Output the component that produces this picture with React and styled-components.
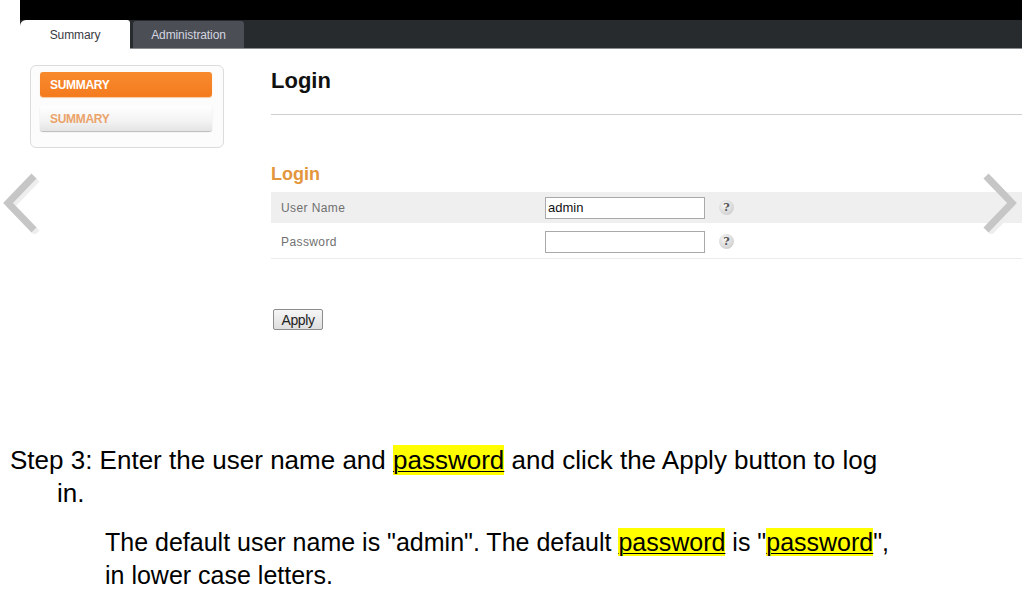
import React from "react";
import styled, { createGlobalStyle } from "styled-components";

const Global = createGlobalStyle`
  html, body { margin: 0; padding: 0; background: #fff; }
  body { font-family: "Liberation Sans", Arial, sans-serif; }
  * { box-sizing: border-box; }
`;

const Page = styled.div`
  position: relative;
  width: 1022px;
  height: 593px;
  overflow: hidden;
  background: #fff;
`;

const TopBar = styled.div`
  margin-left: 20px;
  height: 20px;
  background: #000;
`;

const TabStrip = styled.div`
  margin-left: 20px;
  height: 29px;
  display: flex;
  align-items: flex-end;
  gap: 3px;
  background: #272b2e;
  border-bottom: 1px solid #8a8d90;
`;

const Tab = styled.div`
  width: ${(p) => p.$w}px;
  display: flex;
  align-items: center;
  justify-content: center;
  font-size: 12px;
  letter-spacing: -0.1px;
  border-radius: ${(p) => (p.$active ? "6px 3px 0 0" : "3px 3px 0 0")};
  background: ${(p) => (p.$active ? "#fff" : "#4b4e54")};
  color: ${(p) => (p.$active ? "#3a3a44" : "#d4d6e0")};
  margin-bottom: ${(p) => (p.$active ? "-1px" : "0")};
  height: ${(p) => (p.$active ? "29px" : "27px")};
`;

const Main = styled.div`
  display: flex;
  height: 395px;
`;

const Side = styled.div`
  margin: 16px 0 0 30px;
  width: 194px;
  height: 83px;
  padding: 6px 11px 0 9px;
  border: 1px solid #dcdcdc;
  border-radius: 6px;
  background: #fcfcfc;
  display: flex;
  flex-direction: column;
  gap: 9px;
`;

const SideItem = styled.div`
  height: 25px;
  display: flex;
  align-items: center;
  padding-left: 10px;
  font-size: 12px;
  font-weight: bold;
  letter-spacing: -0.3px;
  border-radius: 3px;
  color: ${(p) => (p.$active ? "#fff" : "#eba36a")};
  background: ${(p) =>
    p.$active
      ? "linear-gradient(#f88a2e, #f47b1e)"
      : "linear-gradient(#ffffff, #f3f3f3 60%, #e4e4e4)"};
  box-shadow: ${(p) =>
    p.$active ? "0 1px 1px #f6c9a0" : "0 1px 1px #b8b8b8"};
`;

const Content = styled.div`
  margin-left: 47px;
  flex: 1;
  display: flex;
  flex-direction: column;
`;

const Title = styled.h1`
  margin: 19px 0 0;
  font-size: 22px;
  line-height: 26px;
  font-weight: bold;
  color: #111;
`;

const Rule = styled.div`
  margin-top: 20px;
  height: 1px;
  background: #cfcfcf;
`;

const SubTitle = styled.h2`
  margin: 48px 0 0;
  font-size: 18px;
  line-height: 22px;
  font-weight: bold;
  color: #e3963c;
`;

const Form = styled.div`
  margin-top: 7px;
  display: flex;
  flex-direction: column;
`;

const Row = styled.div`
  display: flex;
  align-items: center;
  height: ${(p) => (p.$alt ? 32 : 35)}px;
  padding-top: ${(p) => (p.$alt ? 0 : 1)}px;
  background: ${(p) => (p.$alt ? "#efefef" : "#fff")};
  border-bottom: ${(p) => (p.$alt ? "1px solid #fff" : "1px solid #ececec")};
`;

const Label = styled.div`
  width: 274px;
  padding-left: 10px;
  font-size: 12px;
  letter-spacing: 0.4px;
  color: #707070;
`;

const Field = styled.div`
  width: 160px;
  height: 22px;
  border: 1px solid #a9a9a9;
  background: #fff;
  font-size: 13px;
  line-height: 20px;
  padding-left: 2px;
  color: #111;
`;

const Help = styled.div`
  margin-left: 14px;
  width: 15px;
  height: 15px;
  border-radius: 50%;
  background: radial-gradient(circle at 40% 35%, #f6f6f6, #c4c4c4);
  color: #555;
  font-size: 11px;
  font-weight: bold;
  display: flex;
  align-items: center;
  justify-content: center;
  font-family: "DejaVu Serif", serif;
`;

const Apply = styled.button`
  margin: 50px 0 0 2px;
  align-self: flex-start;
  width: 50px;
  height: 21px;
  padding: 0;
  border: 1px solid #8c8c8c;
  border-radius: 2px;
  background: linear-gradient(#f6f6f6, #dedede);
  font-family: "Liberation Sans", Arial, sans-serif;
  font-size: 14px;
  letter-spacing: -0.4px;
  color: #222;
`;

const Doc = styled.div`
  line-height: 33px;
  color: #000;
`;

const Para = styled.p`
  margin: ${(p) => p.$top}px 0 0 ${(p) => p.$left}px;
  padding-left: ${(p) => p.$hang}px;
  text-indent: -${(p) => p.$hang}px;
  font-size: ${(p) => p.$size}px;
`;

const Mark = styled.span`
  background: #ffff00;
  text-decoration: underline;
  text-underline-offset: 2px;
  text-decoration-thickness: 1px;
`;

const Arrow = styled.svg`
  position: absolute;
  top: 172px;
  ${(p) => (p.$side === "left" ? "left: 0;" : "right: 0;")}
  width: 42px;
  height: 62px;
`;

function Chevron({ side }) {
  const pts = side === "left" ? "34,176 8,203 34,230" : "986,176 1012,203 986,230";
  const ox = side === "left" ? 0 : 980;
  return (
    <Arrow $side={side} viewBox={`${ox} 172 42 62`}>
      <polyline
        points={pts}
        fill="none"
        stroke="#eeeeee"
        strokeWidth="7"
        transform="translate(3,3)"
      />
      <polyline points={pts} fill="none" stroke="#c6c6c6" strokeWidth="7" />
    </Arrow>
  );
}

export default function App() {
  return (
    <Page>
      <Global />
      <TopBar />
      <TabStrip>
        <Tab $active $w={110}>Summary</Tab>
        <Tab $w={111}>Administration</Tab>
      </TabStrip>
      <Main>
        <Side>
          <SideItem $active>SUMMARY</SideItem>
          <SideItem>SUMMARY</SideItem>
        </Side>
        <Content>
          <Title>Login</Title>
          <Rule />
          <SubTitle>Login</SubTitle>
          <Form>
            <Row $alt>
              <Label>User Name</Label>
              <Field>admin</Field>
              <Help>?</Help>
            </Row>
            <Row>
              <Label>Password</Label>
              <Field />
              <Help>?</Help>
            </Row>
          </Form>
          <Apply>Apply</Apply>
        </Content>
      </Main>
      <Chevron side="left" />
      <Chevron side="right" />
      <Doc>
        <Para $top={0} $left={10} $hang={47} $size={26}>
          Step 3: Enter the user name and <Mark>password</Mark> and click the Apply button to log
          <br />
          in.
        </Para>
        <Para $top={16} $left={105} $hang={0} $size={25}>
          The default user name is "admin". The default <Mark>password</Mark> is "
          <Mark>password</Mark>",
          <br />
          in lower case letters.
        </Para>
      </Doc>
    </Page>
  );
}
